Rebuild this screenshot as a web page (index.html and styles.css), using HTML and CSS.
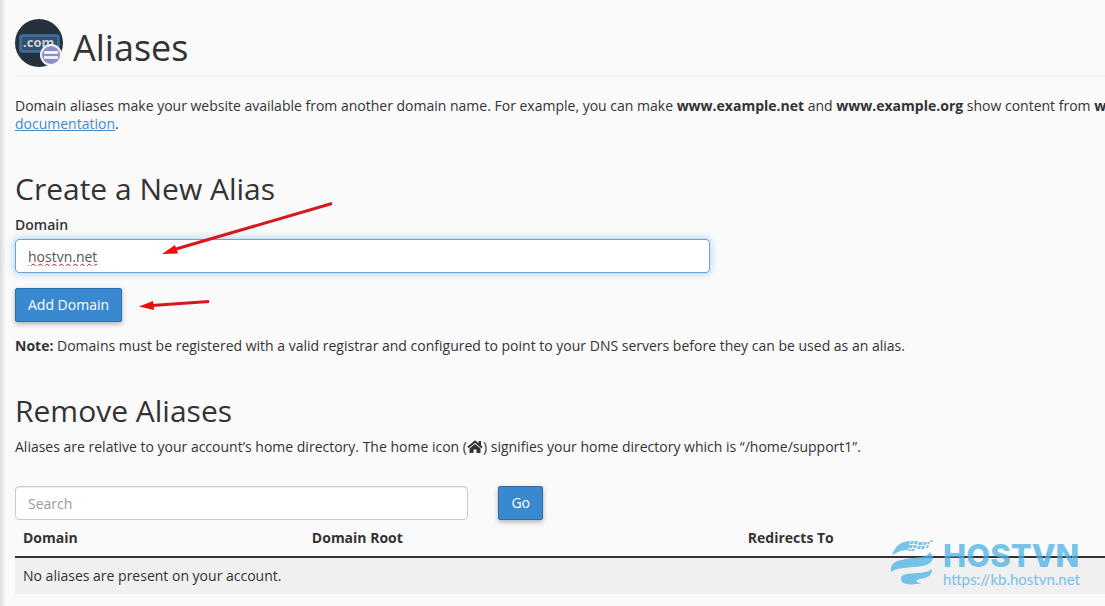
FILE: index.html
```html
<!DOCTYPE html>
<html lang="en">
<head>
    <meta charset="UTF-8">
    <meta name="viewport" content="width=device-width, initial-scale=1.0">
    <title>Aliases</title>
    <link rel="stylesheet" href="styles.css">
</head>
<body>
    <main class="content">
        <header class="page-header">
            <svg class="page-icon" viewBox="0 0 48 48" aria-hidden="true">
                <circle cx="24" cy="24" r="24" fill="#25323d"/>
                <rect x="4" y="15" width="41" height="19" rx="3" fill="#2f608f"/>
                <rect x="6" y="17" width="37" height="15" rx="2" fill="#34506b" stroke="#4d82b3"/>
                <text class="icon-text" x="8" y="28">.com</text>
                <circle cx="36" cy="36" r="11" fill="#f4f5fa"/>
                <circle cx="36" cy="36" r="9" fill="#8d90c4"/>
                <path d="M29 33.500H43M29 38.500H43" stroke="#fff" stroke-width="2.500"/>
            </svg>
            <h1>Aliases</h1>
        </header>

        <p class="intro">Domain aliases make your website available from another domain name. For example, you can make <strong>www.example.net</strong> and <strong>www.example.org</strong> show content from <strong>www</strong><br><a href="#">documentation</a>.</p>

        <section class="section">
            <h2>Create a New Alias</h2>
            <form class="create-form">
                <label for="domain">Domain</label>
                <input class="text-box domain-box" type="text" id="domain" value="hostvn.net">
                <button class="btn" type="button">Add Domain</button>
            </form>
            <p><strong>Note:</strong> Domains must be registered with a valid registrar and configured to point to your DNS servers before they can be used as an alias.</p>
        </section>

        <section class="section">
            <h2>Remove Aliases</h2>
            <p>Aliases are relative to your account’s home directory. The home icon (<svg class="home-icon" viewBox="0 0 16 14" aria-hidden="true">
                <path d="M1 7.500L8 1.500L15 7.500" fill="none" stroke="#333" stroke-width="2"/>
                <path d="M11.500 1H14V6L11.500 4ZM8 4L13.500 8.600V13H9.500V9.500H6.500V13H2.500V8.600Z" fill="#333"/>
            </svg>) signifies your home directory which is “/home/support1”.</p>
            <form class="search-form">
                <input class="text-box search-box" type="search" placeholder="Search" aria-label="Search">
                <button class="btn" type="button">Go</button>
            </form>
            <table class="alias-table">
                <thead>
                    <tr>
                        <th class="col-domain">Domain</th>
                        <th class="col-root">Domain Root</th>
                        <th>Redirects To</th>
                    </tr>
                </thead>
                <tbody>
                    <tr>
                        <td colspan="3">No aliases are present on your account.</td>
                    </tr>
                </tbody>
            </table>
        </section>
    </main>

    <!-- Arrows pointing at the domain box and the button -->
    <svg class="arrows" width="340" height="330" aria-hidden="true">
        <path d="M332 203.500L176 249M209 301.500L152 305.500" fill="none" stroke="#d8161b" stroke-width="3"/>
        <path d="M162 254L175 245L178 253.500ZM139 306.500L153 301L154 310Z" fill="#f00a0a"/>
    </svg>

    <div class="watermark">
        <svg class="watermark-logo" viewBox="0 0 44 46" aria-hidden="true">
            <path d="M1 16C3 6 11 1 19 1L17 10C11 10 5 12 1 16Z"/>
            <path d="M0 32C-1 23 4 21 15 19C29 17 38 17 38 12C45 16 43 24 31 26C18 28 6 27 0 32Z"/>
            <path d="M10 39C10 33 18 34 27 33C34 32 38 32 41 29C41 36 36 38 29 39C24 40 24 43 31 43C18 46 10 44 10 39Z"/>
            <path d="M20 1H23L22 4H19ZM24 1H27L26 4H23ZM28 2H32L31 5H27ZM18 5H22L21 8H17ZM23 5H26L25 8H22ZM27 6H30L29 9H26ZM18 9H20L19 11H17ZM21 9H24L23 11H20ZM31 6H34L33 9H30ZM33 2H36L35 5H32ZM36 5H38L37 8H35ZM37 2H39L38 4H36ZM40 0H42L41 2H39Z"/>
        </svg>
        <div class="watermark-text">
            <span class="watermark-name">HOSTVN</span>
            <span class="watermark-url">https://kb.hostvn.net</span>
        </div>
    </div>
</body>
</html>
```
FILE: styles.css
```css
* {
    box-sizing: border-box;
}

body, html {
    margin: 0;
    padding: 0;
    min-height: 100%;
    overflow: hidden;
}

body {
    position: relative;
    font-family: "Open Sans", sans-serif;
    font-size: 14px;
    line-height: 18px;
    color: #333;
    background: #fafafa;
}

.content {
    min-height: 100vh;
    padding: 19px 0 12px 15px;
    background: linear-gradient(to right, #dcdcdc, #fafafa 6px);
}

.page-header {
    display: flex;
    align-items: center;
    gap: 10px;
    height: 58px;
    padding-bottom: 9px;
    border-bottom: 1px solid #eceef0;
}

.page-icon {
    width: 48px;
    height: 48px;
}

.icon-text {
    font-size: 13px;
    font-weight: 700;
    fill: #c9d3de;
}

h1, h2 {
    margin: 0;
    font-weight: 400;
}

h1 {
    font-size: 36px;
    line-height: 40px;
    padding-top: 10px;
}

h2 {
    font-size: 30px;
    line-height: 34px;
    margin-bottom: 10px;
}

p {
    margin: 0;
}

.intro {
    margin-top: 20px;
    white-space: nowrap;
}

a {
    color: #428bca;
}

.section {
    margin-top: 39px;
}

.create-form {
    display: flex;
    flex-direction: column;
    align-items: flex-start;
    margin-bottom: 15px;
}

.create-form label {
    font-weight: 600;
    margin-bottom: 5px;
}

.text-box {
    height: 34px;
    padding: 6px 12px;
    font-family: inherit;
    font-size: 14px;
    color: #555;
    background: #fff;
    border: 1px solid #ccc;
    border-radius: 4px;
    box-shadow: inset 0 1px 1px rgba(0, 0, 0, 0.08);
    outline: none;
    appearance: none;
}

.text-box::placeholder {
    color: #999;
}

.domain-box {
    width: 63.8%;
    margin-bottom: 15px;
    border-color: #66a5d5;
    box-shadow: 0 0 8px rgba(102, 175, 233, 0.6);
    text-decoration: underline wavy #c8141a 1px;
}

.btn {
    height: 34px;
    padding: 0 12px 2px;
    font-family: inherit;
    font-size: 14px;
    color: #fff;
    background: #3889d0;
    border: 1px solid #2d6da8;
    border-radius: 2px;
    box-shadow: 0 2px 5px rgba(0, 0, 0, 0.3);
    cursor: pointer;
}

.home-icon {
    width: 16px;
    height: 14px;
    vertical-align: -2px;
}

.search-form {
    display: flex;
    gap: 30px;
    margin-top: 30px;
}

.search-box {
    width: 41.6%;
}

.alias-table {
    width: 100%;
    table-layout: fixed;
    border-collapse: collapse;
}

.alias-table th, .alias-table td {
    padding: 9px 8px;
    text-align: left;
}

.alias-table th {
    border-bottom: 2px solid #333;
}

.alias-table td {
    background: #f0f0f0;
}

.col-domain {
    width: 26.5%;
}

.col-root {
    width: 40%;
}

.arrows {
    position: absolute;
    top: 0;
    left: 0;
    pointer-events: none;
}

/* Brand mark laid over the bottom right corner */
.watermark {
    position: absolute;
    right: 25px;
    bottom: 20px;
    display: flex;
    gap: 8px;
    color: #4bb3e5;
    opacity: 0.75;
    pointer-events: none;
}

.watermark-logo {
    width: 44px;
    height: 46px;
    fill: #4bb3e5;
}

.watermark-text {
    display: flex;
    flex-direction: column;
}

.watermark-name {
    font-family: Inter, sans-serif;
    font-size: 31px;
    font-weight: 800;
    line-height: 32px;
}

.watermark-url {
    font-family: Lato, sans-serif;
    font-size: 15px;
    line-height: 14px;
}
```
